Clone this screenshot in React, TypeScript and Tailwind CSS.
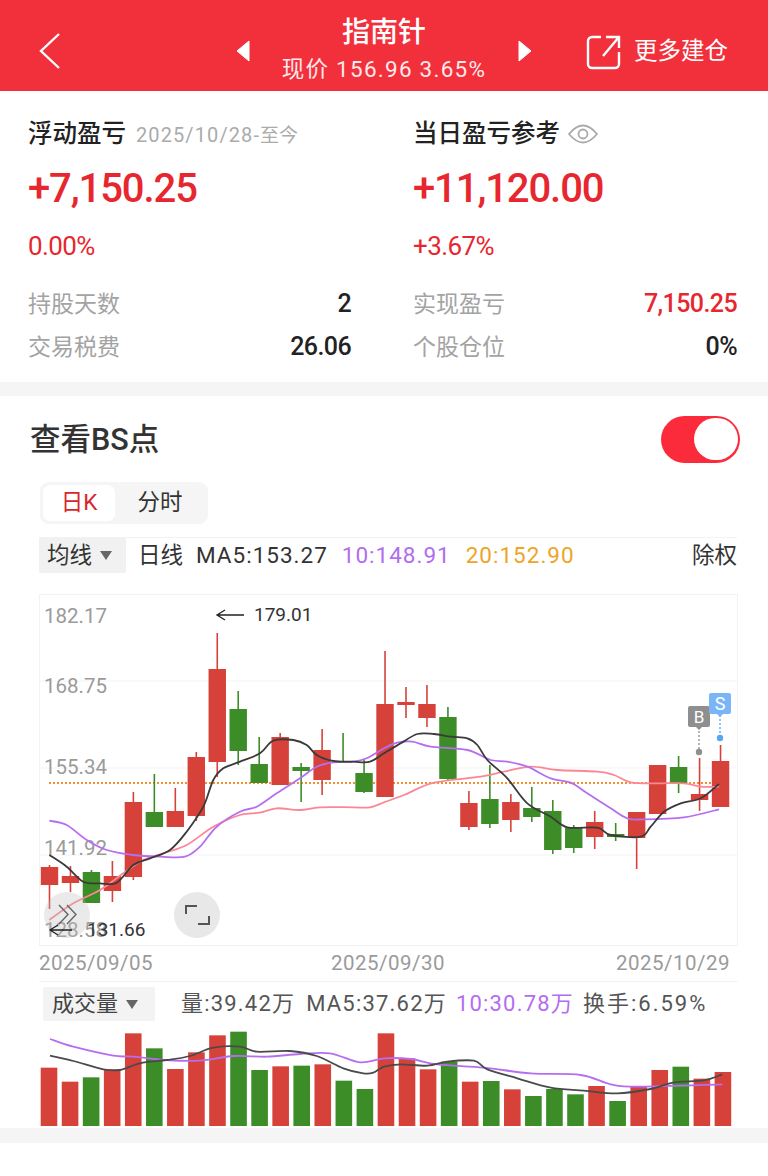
import React from "react";

const CJK = "font-['Roboto','Noto_Sans_CJK_SC',sans-serif]";
const RED = "#d6423a";
const GREEN = "#3c8c28";

// [body-top, body-bottom, wick-top, wick-bottom, up]
const candles: [number, number, number, number, 0 | 1][] = [
  [867, 885, 865, 909, 1], [876, 883, 866, 892, 1], [872, 903, 870, 903, 0], [876, 891, 861, 902, 1],
  [802, 877, 792, 880, 1], [812, 827, 774, 827, 0], [811, 827, 788, 827, 1], [757, 816, 752, 821, 1],
  [669, 762, 633, 777, 1], [709, 751, 691, 765, 0], [764, 783, 737, 783, 0], [737, 785, 733, 785, 1],
  [767, 771, 763, 802, 0], [750, 780, 729, 795, 1], [761, 763, 733, 763, 0], [773, 792, 759, 793, 0],
  [704, 797, 651, 797, 1], [702, 705, 687, 718, 1], [704, 718, 685, 727, 1], [717, 779, 707, 781, 0],
  [803, 827, 791, 830, 1], [799, 824, 765, 828, 0], [802, 820, 794, 832, 1], [808, 817, 787, 822, 0],
  [811, 850, 800, 854, 0], [828, 848, 825, 853, 0], [822, 837, 811, 849, 1], [834, 837, 823, 841, 0],
  [812, 838, 812, 869, 1], [765, 814, 765, 814, 1], [767, 783, 756, 793, 0], [794, 800, 758, 811, 1],
  [761, 807, 745, 807, 1],
];

const volumes: [number, 0 | 1][] = [
  [278, 1], [320, 1], [307, 0], [283, 1], [175, 1], [220, 0], [282, 1], [232, 1], [181, 1], [170, 0], [285, 0],
  [274, 1], [272, 0], [268, 1], [317, 0], [342, 0], [175, 1], [250, 1], [283, 1], [260, 0], [320, 1], [318, 0],
  [343, 1], [363, 0], [342, 0], [358, 0], [333, 1], [378, 0], [333, 1], [285, 1], [275, 0], [311, 1], [291, 1],
];

type P = [number, number];
function smooth(points: P[]) {
  let d = `M${points[0][0]} ${points[0][1]}`;
  for (let i = 0; i < points.length - 1; i++) {
    const p0 = points[Math.max(i - 1, 0)];
    const p1 = points[i];
    const p2 = points[i + 1];
    const p3 = points[Math.min(i + 2, points.length - 1)];
    const c1x = p1[0] + (p2[0] - p0[0]) / 6;
    const c1y = p1[1] + (p2[1] - p0[1]) / 6;
    const c2x = p2[0] - (p3[0] - p1[0]) / 6;
    const c2y = p2[1] - (p3[1] - p1[1]) / 6;
    d += ` C${c1x.toFixed(1)} ${c1y.toFixed(1)} ${c2x.toFixed(1)} ${c2y.toFixed(1)} ${p2[0].toFixed(1)} ${p2[1].toFixed(1)}`;
  }
  return d;
}
// Curves are noted in 3x crop units: left half from x=0, right half from x=384.
const kc = (l: P[], r: P[]): P[] => [
  ...l.map(([x, y]): P => [x / 3, 590 + y / 3]),
  ...r.map(([x, y]): P => [384 + x / 3, 590 + y / 3]),
];
const vc = (l: P[], r: P[]): P[] => [
  ...l.map(([x, y]): P => [x / 3, 975 + y / 3]),
  ...r.map(([x, y]): P => [384 + x / 3, 975 + y / 3]),
];

const ma5 = kc(
  [[148,795],[200,830],[250,875],[300,880],[350,878],[400,825],[450,805],[510,780],[560,725],[610,650],[640,570],[670,535],[720,515],[780,490],[820,452],[880,450],[920,465],[950,495],[1000,513],[1060,515],[1110,515]],
  [[0,490],[50,460],[100,432],[150,432],[200,440],[250,445],[280,465],[310,510],[370,565],[430,640],[500,680],[550,712],[640,713],[680,735],[770,740],[800,710],[840,665],[890,640],[950,625],[1005,582]]
);
const ma10 = kc(
  [[148,692],[200,705],[260,750],[320,780],[400,795],[480,800],[555,800],[600,770],[650,710],[720,665],[770,650],[830,610],[900,565],[950,530],[1000,517],[1060,515],[1100,505]],
  [[0,475],[40,458],[85,455],[140,470],[250,480],[320,510],[370,515],[430,530],[500,565],[560,578],[610,610],[680,655],[730,685],[780,688],[900,682],[1005,658]]
);
const ma20 = kc(
  [[148,990],[220,940],[300,900],[370,850],[430,810],[490,790],[560,765],[640,710],[720,675],[780,668],[830,655],[900,660],[960,652],[1060,652],[1110,652]],
  [[0,637],[60,615],[150,578],[290,560],[360,545],[440,530],[520,540],[640,545],[690,555],[740,577],[820,580],[900,580],[950,590],[1005,590]]
);
const v5 = vc(
  [[150,242],[220,258],[310,283],[360,285],[420,265],[500,255],[570,243],[640,218],[720,215],[770,230],[870,228],[950,243],[1030,280],[1090,295],[1120,293]],
  [[0,275],[50,268],[130,272],[190,260],[270,257],[310,283],[400,310],[500,338],[600,347],[700,355],[800,342],[870,322],[960,316],[1015,298]]
);
const v10 = vc(
  [[150,192],[220,215],[340,242],[400,245],[500,255],[600,257],[700,243],[800,245],[900,237],[990,235],[1080,262]],
  [[0,250],[80,252],[160,268],[300,278],[440,295],[590,300],[680,328],[760,335],[1015,328]]
);

function KChart() {
  return (
    <svg width={699} height={352} viewBox="39 594 699 352" className="block" style={{ fontFamily: "Roboto, sans-serif" }}>
      <rect x={39.5} y={594.5} width={698} height={351} fill="#fff" stroke="#f3f3f3" />
      {[681, 768, 855].map((y) => (
        <line key={y} x1={39} x2={737} y1={y} y2={y} stroke="#f3f3f3" />
      ))}
      <g fill="#9a9a9a" fontSize={20.5}>
        <text x={44} y={623}>182.17</text>
        <text x={44} y={693}>168.75</text>
        <text x={44} y={774}>155.34</text>
        <text x={44} y={855}>141.92</text>
        <text x={44} y={937}>128.58</text>
      </g>
      <line x1={49} x2={722} y1={783} y2={783} stroke="#f0912e" strokeWidth={2} strokeDasharray="2 2" />
      {candles.map(([a, b, t, w, up], i) => {
        const x = 49.5 + 20.97 * i;
        const c = up ? RED : GREEN;
        return (
          <g key={i}>
            <line x1={x} x2={x} y1={t} y2={w} stroke={c} strokeWidth={1.6} />
            <rect x={x - 8.7} y={a} width={17.4} height={b - a} fill={c} />
          </g>
        );
      })}
      <path d={smooth(ma20)} fill="none" stroke="#fb8795" strokeWidth={1.8} />
      <path d={smooth(ma10)} fill="none" stroke="#b66ef0" strokeWidth={1.8} />
      <path d={smooth(ma5)} fill="none" stroke="#3a3a3a" strokeWidth={1.8} />
      <circle cx={67} cy={915} r={23} fill="#bdbdbd" fillOpacity={0.32} />
      <circle cx={197} cy={915} r={23} fill="#e6e6e6" fillOpacity={0.9} />
      <path d="M59 905 L68 914.5 L59 924 M67 905 L76 914.5 L67 924" fill="none" stroke="#666" strokeWidth={1.4} />
      <path d="M186 914 V906 H197 M209 916 V924 H198" fill="none" stroke="#555" strokeWidth={2} />
      <path d="M244 615 H218 M225 610 L217 615 L225 620" fill="none" stroke="#222" strokeWidth={1.3} />
      <text x={254} y={621} fontSize={19} fill="#333">179.01</text>
      <path d="M72 930 H51 M58 925 L50 930 L58 935" fill="none" stroke="#222" strokeWidth={1.3} />
      <text x={87} y={936} fontSize={19} fill="#333">131.66</text>
      {/* B marker */}
      <line x1={699} x2={699} y1={727} y2={750} stroke="#9a9a9a" strokeWidth={1.5} strokeDasharray="2 2" />
      <circle cx={699} cy={752} r={3.2} fill="#8f8f8f" />
      <path d="M690 706 H708 a2 2 0 0 1 2 2 V725 a2 2 0 0 1 -2 2 H702 L699 730 L696 727 H690 a2 2 0 0 1 -2 -2 V708 a2 2 0 0 1 2 -2 Z" fill="#8f8f8f" />
      <text x={699} y={723} textAnchor="middle" fontSize={17} fill="#fff">B</text>
      {/* S marker */}
      <line x1={720} x2={720} y1={715} y2={735} stroke="#6eb0f5" strokeWidth={1.5} strokeDasharray="2 2" />
      <circle cx={720} cy={738} r={3.2} fill="#5aa5f2" />
      <path d="M711 693 H729 a2 2 0 0 1 2 2 V712 a2 2 0 0 1 -2 2 H723 L720 717 L717 714 H711 a2 2 0 0 1 -2 -2 V695 a2 2 0 0 1 2 -2 Z" fill="#7ab6f7" />
      <text x={720} y={710} textAnchor="middle" fontSize={18} fill="#fff">S</text>
    </svg>
  );
}

function VolChart() {
  return (
    <svg width={699} height={107} viewBox="39 1021 699 107" className="block">
      {volumes.map(([t, up], i) => {
        const x = 49 + 21.06 * i;
        const y = 975 + t / 3;
        return <rect key={i} x={x - 8.3} y={y} width={16.6} height={1126 - y} fill={up ? RED : GREEN} />;
      })}
      <path d={smooth(v10)} fill="none" stroke="#b66ef0" strokeWidth={1.8} />
      <path d={smooth(v5)} fill="none" stroke="#4a4a4a" strokeWidth={1.8} />
    </svg>
  );
}

function Caret({ className = "" }: { className?: string }) {
  return (
    <svg width={14} height={11} viewBox="0 0 14 11" className={className}>
      <path d="M1 1 H13 L7 10 Z" fill="#666" />
    </svg>
  );
}

function Row({ label, value, valueClass = "text-[#222]" }: { label: string; value: string; valueClass?: string }) {
  return (
    <div className="flex h-[43px] items-center justify-between">
      <span className="mt-[4px] text-[23px] text-[#a3a3a3]">{label}</span>
      <span className={`text-[25px] font-medium tracking-[-0.6px] ${valueClass}`}>{value}</span>
    </div>
  );
}

export default function App() {
  return (
    <div className={`h-[1176px] w-[768px] overflow-hidden bg-white ${CJK}`}>
      {/* header */}
      <header className="box-border flex h-[91px] items-center bg-[#f2303c] pt-[10px] text-white">
        <svg width={24} height={38} viewBox="0 0 24 38" className="ml-[38px]">
          <path d="M21 2 L3 19 L21 36" fill="none" stroke="#fff" strokeWidth={2.4} />
        </svg>
        <svg width={14} height={22} viewBox="0 0 14 22" className="ml-[174px]">
          <path d="M13 1 V21 L1 11 Z" fill="#fff" stroke="#fff" strokeLinejoin="round" />
        </svg>
        <div className="flex w-[268px] flex-col items-center">
          <div className="text-[28px] font-medium leading-[36px]">指南针</div>
          <div className="whitespace-nowrap text-[22.5px] leading-[36px] tracking-[1.25px] text-[#ffe9ea]">现价 156.96 3.65%</div>
        </div>
        <svg width={14} height={22} viewBox="0 0 14 22">
          <path d="M1 1 V21 L13 11 Z" fill="#fff" stroke="#fff" strokeLinejoin="round" />
        </svg>
        <svg width={36} height={36} viewBox="0 0 36 36" className="ml-[54px] mt-[3px]">
          <path d="M15 3 H6 a4 4 0 0 0 -4 4 V30 a4 4 0 0 0 4 4 H29 a4 4 0 0 0 4 -4 V18 M20 3 H33 V14 M33 3 L17 22" fill="none" stroke="#fff" strokeWidth={2.4} />
        </svg>
        <span className="ml-[12px] mt-[3px] text-[23.5px] leading-none">更多建仓</span>
      </header>

      {/* summary */}
      <section className="grid h-[291px] grid-cols-[385px_324px] pl-[28px] pt-[25px]">
        <div className="pr-[62px]">
          <div className="flex h-[36px] items-center gap-[10px] whitespace-nowrap">
            <span className="text-[24.5px] font-medium text-[#222]">浮动盈亏</span>
            <span className="mt-[2px] text-[20px] tracking-[1.1px] text-[#ababab]">
              2025/10/28-<span className="text-[19px] tracking-normal">至今</span>
            </span>
          </div>
          <div className="mt-[13px] h-[48px] text-[40px] font-medium leading-[48px] tracking-[-1.1px] text-[#e7272f]">+7,150.25</div>
          <div className="mt-[17px] h-[32px] text-[26px] leading-[32px] tracking-[-0.6px] text-[#e7272f]">0.00%</div>
          <div className="mt-[20px]">
            <Row label="持股天数" value="2" />
            <Row label="交易税费" value="26.06" />
          </div>
        </div>
        <div>
          <div className="flex h-[36px] items-center gap-[8px]">
            <span className="text-[24.5px] font-medium text-[#222]">当日盈亏参考</span>
            <svg width={30} height={22} viewBox="0 0 30 22">
              <path d="M1 11 Q15 -6 29 11 Q15 28 1 11 Z" fill="none" stroke="#aaa" strokeWidth={1.8} />
              <circle cx={15} cy={11} r={4.5} fill="none" stroke="#aaa" strokeWidth={1.8} />
            </svg>
          </div>
          <div className="mt-[13px] h-[48px] text-[40px] font-medium leading-[48px] tracking-[-1.1px] text-[#e7272f]">+11,120.00</div>
          <div className="mt-[17px] h-[32px] text-[26px] leading-[32px] tracking-[-0.6px] text-[#e7272f]">+3.67%</div>
          <div className="mt-[20px]">
            <Row label="实现盈亏" value="7,150.25" valueClass="text-[#e7272f]" />
            <Row label="个股仓位" value="0%" />
          </div>
        </div>
      </section>

      <div className="h-[14px] bg-[#f5f5f5]" />

      {/* chart card */}
      <section className="h-[732px]">
        <div className="flex h-[86px] items-center justify-between pl-[30px] pr-[28px]">
          <span className="mt-[1px] text-[30.5px] font-medium text-[#333]">查看BS点</span>
          <div className="flex h-[47px] w-[79px] items-center justify-end rounded-full bg-[#fb2b3b] pr-[2px]">
            <div className="h-[42px] w-[44px] rounded-full bg-white" />
          </div>
        </div>

        <div className="ml-[40px] flex h-[42px] w-[168px] items-center rounded-[9px] bg-[#f5f5f5] px-[3px]">
          <div className="flex h-[36px] w-[72px] items-center justify-center rounded-[7px] bg-white text-[22.5px] text-[#d9262c]">日K</div>
          <div className="flex-1 text-center text-[22.5px] text-[#333]">分时</div>
        </div>

        {/* MA row */}
        <div className="ml-[39px] mt-[13px] flex h-[36px] w-[698px] items-center border-t border-[#f3f3f3] text-[22.5px] leading-none">
          <div className="flex h-[35px] w-[87px] items-center gap-[7px] bg-[#f1f1f1] pl-[8px] text-[#333]">
            均线
            <Caret />
          </div>
          <span className="ml-[12px] text-[#333]">日线</span>
          <span className="ml-[13px] tracking-[1px] text-[#333]">MA5:153.27</span>
          <span className="ml-[14px] tracking-[1px] text-[#b26df0]">10:148.91</span>
          <span className="ml-[15px] tracking-[1px] text-[#eda526]">20:152.90</span>
          <span className="ml-auto text-[#333]">除权</span>
        </div>

        <div className="ml-[39px] mt-[21px]">
          <KChart />
        </div>

        <div className="ml-[39px] mr-[38px] flex h-[35px] items-center justify-between text-[20.5px] tracking-[0.5px] text-[#9a9a9a]">
          <span>2025/09/05</span>
          <span className="ml-[7px]">2025/09/30</span>
          <span>2025/10/29</span>
        </div>

        {/* volume */}
        <div className="ml-[39px] w-[699px] border-t border-[#f3f3f3]">
          <div className="flex h-[39px] items-end text-[22px] leading-none text-[#555]">
            <div className="ml-[4px] flex h-[34px] w-[112px] items-center gap-[7px] rounded-[2px] bg-[#f3f3f3] pl-[9px] text-[#444]">
              成交量
              <Caret />
            </div>
            <div className="ml-[26px] flex h-[34px] items-center whitespace-nowrap tracking-[1.2px]">
              <span>量:39.42万</span>
              <span className="ml-[11px]">MA5:37.62万</span>
              <span className="ml-[9px] text-[#b26df0]">10:30.78万</span>
              <span className="ml-[9px] tracking-[2px]">换手:6.59%</span>
            </div>
          </div>
          <VolChart />
        </div>
      </section>

      <div className="h-[15px] bg-[#f5f5f5]" />
    </div>
  );
}
